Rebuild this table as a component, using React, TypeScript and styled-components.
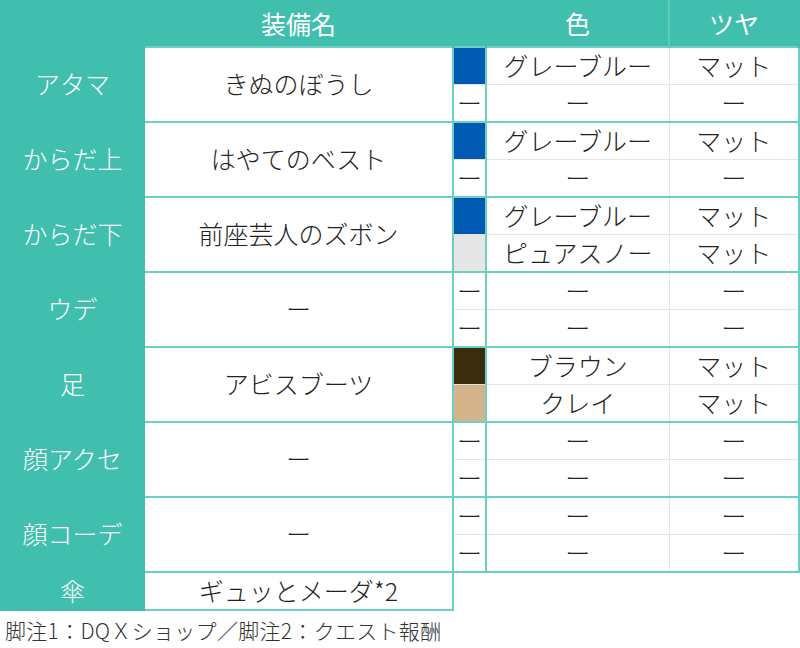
import styled, { createGlobalStyle } from 'styled-components';

const TEAL = '#40beae';
const LINE = '#6bd0c2';
const GREY = '#e4e4e4';

const GlobalStyle = createGlobalStyle`
  body {
    margin: 0;
    background: #fff;
    font-family: "Noto Sans CJK JP", "Noto Sans", sans-serif;
  }
`;

const Table = styled.table`
  width: 798px;
  border-collapse: collapse;
  table-layout: fixed;
  font-size: 25px;
  font-weight: 300;
  line-height: 1.2;
  color: #222;
  text-align: center;
`;

const HeadCell = styled.th<{ $divider?: boolean }>`
  background: ${TEAL};
  color: #fff;
  font-weight: 400;
  height: 42px;
  padding: 0 0 2px;
  border: 2px solid ${TEAL};
  border-bottom: none;
  border-right-color: ${(p) => (p.$divider ? '#5ccbbc' : TEAL)};
`;

const LabelCell = styled.th`
  background: ${TEAL};
  color: #fff;
  font-weight: 300;
  padding: 0 0 3px;
  border: 2px solid ${TEAL};
`;

const NameCell = styled.td`
  padding: 0 0 3px;
  border: 2px solid ${LINE};
`;

const SubRow = styled.tr<{ $second?: boolean }>`
  height: ${(p) => (p.$second ? '38px' : '37px')};
`;

const edge = (second?: boolean) =>
  second
    ? `border-bottom: 2px solid ${LINE};`
    : `border-top: 2px solid ${LINE}; border-bottom: 1px solid ${GREY};`;

const SwatchCell = styled.td<{ $color?: string; $second?: boolean }>`
  padding: 0 0 2px;
  background: ${(p) => p.$color ?? '#fff'};
  border-left: 2px solid ${LINE};
  border-right: 2px solid ${LINE};
  ${(p) => edge(p.$second)}
`;

const ColorCell = styled.td<{ $second?: boolean }>`
  padding: 0 0 2px;
  border-right: 1px solid ${GREY};
  ${(p) => edge(p.$second)}
`;

const GlossCell = styled.td<{ $second?: boolean }>`
  padding: 0 0 2px;
  border-right: 2px solid ${LINE};
  ${(p) => edge(p.$second)}
`;

const FootNote = styled.p`
  margin: 7px 0 0 5px;
  font-size: 21px;
  font-weight: 300;
  letter-spacing: 0.3px;
  line-height: 1.2;
  color: #333;
`;

type Dye = { swatch?: string; name: string; gloss: string };
type Part = { label: string; name: string; dyes: [Dye, Dye] };

const DASH = 'ー';
const none: Dye = { name: DASH, gloss: DASH };
const blue: Dye = { swatch: '#005ab4', name: 'グレーブルー', gloss: 'マット' };

const parts: Part[] = [
  { label: 'アタマ', name: 'きぬのぼうし', dyes: [blue, none] },
  { label: 'からだ上', name: 'はやてのベスト', dyes: [blue, none] },
  {
    label: 'からだ下',
    name: '前座芸人のズボン',
    dyes: [blue, { swatch: '#e6e6e6', name: 'ピュアスノー', gloss: 'マット' }],
  },
  { label: 'ウデ', name: DASH, dyes: [none, none] },
  {
    label: '足',
    name: 'アビスブーツ',
    dyes: [
      { swatch: '#3b2c0d', name: 'ブラウン', gloss: 'マット' },
      { swatch: '#d5b38b', name: 'クレイ', gloss: 'マット' },
    ],
  },
  { label: '顔アクセ', name: DASH, dyes: [none, none] },
  { label: '顔コーデ', name: DASH, dyes: [none, none] },
];

const App = () => {
  return (
    <>
      <GlobalStyle />
      <Table>
        <colgroup>
          <col style={{ width: 143 }} />
          <col style={{ width: 309 }} />
          <col style={{ width: 33 }} />
          <col style={{ width: 183 }} />
          <col style={{ width: 130 }} />
        </colgroup>
        <thead>
          <tr>
            <HeadCell />
            <HeadCell>装備名</HeadCell>
            <HeadCell />
            <HeadCell $divider>色</HeadCell>
            <HeadCell>ツヤ</HeadCell>
          </tr>
        </thead>
        <tbody>
          {parts.map((part) =>
            part.dyes.map((dye, i) => (
              <SubRow key={part.label + i} $second={i === 1}>
                {i === 0 && (
                  <>
                    <LabelCell rowSpan={2}>{part.label}</LabelCell>
                    <NameCell rowSpan={2}>{part.name}</NameCell>
                  </>
                )}
                <SwatchCell $color={dye.swatch} $second={i === 1}>
                  {dye.swatch ? '' : DASH}
                </SwatchCell>
                <ColorCell $second={i === 1}>{dye.name}</ColorCell>
                <GlossCell $second={i === 1}>{dye.gloss}</GlossCell>
              </SubRow>
            ))
          )}
          <SubRow $second>
            <LabelCell>傘</LabelCell>
            <NameCell>ギュッとメーダ*2</NameCell>
          </SubRow>
        </tbody>
      </Table>
      <FootNote>脚注1：DQＸショップ／脚注2：クエスト報酬</FootNote>
    </>
  );
};

export default App;
